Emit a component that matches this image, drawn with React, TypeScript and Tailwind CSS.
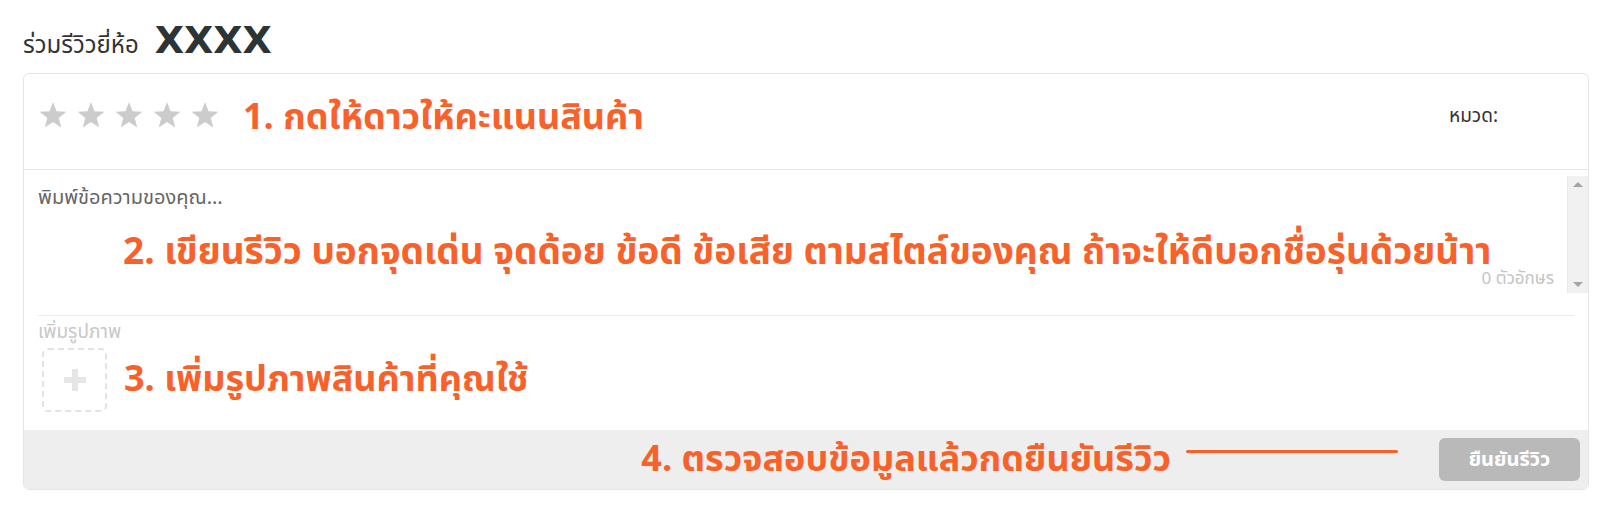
const orange = "text-[#f8622a]";

const Star = () => (
  <svg width="30" height="28" viewBox="0 0 24 23" className="shrink-0">
    <path
      d="M12 0.8l2.9 7.6 8.1.4-6.3 5.1 2.1 7.9L12 17.3l-6.8 4.5 2.1-7.9L1 8.8l8.1-.4z"
      fill="#cccccc"
    />
  </svg>
);

const Scrollbar = () => (
  <div className="w-[21px] h-[117px] mt-[6px] bg-[#f1f1f1] border-l border-[#e9e9e9] flex flex-col justify-between items-center py-[6px]">
    <div className="w-0 h-0 border-l-[5px] border-r-[5px] border-b-[5px] border-l-transparent border-r-transparent border-b-[#a3a3a3]" />
    <div className="w-0 h-0 border-l-[5px] border-r-[5px] border-t-[5px] border-l-transparent border-r-transparent border-t-[#a3a3a3]" />
  </div>
);

const App = () => {
  return (
    <div
      className="w-[1609px] h-[505px] bg-white px-[23px] pr-[20px] pt-[20px]"
      style={{ fontFamily: '"Noto Sans Thai", "Noto Sans", sans-serif' }}
    >
      <div className="flex items-baseline gap-[16px] h-[40px]">
        <span className="text-[24px] text-[#333] leading-[30px]">ร่วมรีวิวยี่ห้อ</span>
        <span
          className="text-[38px] font-bold text-[#2d3436] leading-[40px]"
          style={{ fontFamily: '"DejaVu Sans", sans-serif' }}
        >
          XXXX
        </span>
      </div>

      <div className="mt-[13px] border border-[#e5e5e5] rounded-[6px] overflow-hidden">
        {/* rating row */}
        <div className="h-[95px] flex items-center pl-[14px] pr-[90px] pb-[8px]">
          <div className="flex gap-[8px] mb-[6px]">
            {[1, 2, 3, 4, 5].map((n) => (
              <Star key={n} />
            ))}
          </div>
          <span className={`ml-[23px] text-[36px] font-bold leading-[44px] ${orange}`}>
            1. กดให้ดาวให้คะแนนสินค้า
          </span>
          <span className="ml-auto text-[19px] text-[#333]">หมวด:</span>
        </div>

        {/* text area */}
        <div className="border-t border-[#e6e6e6] flex h-[146px]">
          <div className="flex-1 flex flex-col pl-[14px] pr-[13px] pt-[15px]">
            <span className="text-[20px] text-[#666] leading-[26px]">พิมพ์ข้อความของคุณ...</span>
            <span className={`ml-[85px] mt-[20px] text-[37px] font-bold leading-[44px] ${orange}`}>
              2. เขียนรีวิว บอกจุดเด่น จุดด้อย ข้อดี ข้อเสีย ตามสไตล์ของคุณ ถ้าจะให้ดีบอกชื่อรุ่นด้วยน้าา
            </span>
            <span className="self-end text-[17px] text-[#c4c4c4] leading-[20px] -mt-[6px]">
              0 ตัวอักษร
            </span>
          </div>
          <Scrollbar />
        </div>

        {/* photos */}
        <div className="mx-[14px] border-t border-[#ebebeb] pt-[7px] pb-[18px]">
          <div className="text-[19px] text-[#c8c8c8] leading-[20px]">เพิ่มรูปภาพ</div>
          <div className="mt-[5px] flex items-center">
            <div className="ml-[4px] w-[65px] h-[64px] border-2 border-dashed border-[#e3e3e3] rounded-[6px] flex items-center justify-center">
              <svg width="22" height="22" viewBox="0 0 22 22">
                <rect x="8" y="0" width="6" height="22" fill="#e6e6e6" />
                <rect x="0" y="8" width="22" height="6" fill="#e6e6e6" />
              </svg>
            </div>
            <span className={`ml-[17px] text-[36px] font-bold leading-[44px] ${orange}`}>
              3. เพิ่มรูปภาพสินค้าที่คุณใช้
            </span>
          </div>
        </div>

        {/* footer */}
        <div className="bg-[#eeeeee] h-[59px] flex items-center justify-end p-[8px]">
          <span className={`text-[36px] font-bold leading-[44px] ${orange}`}>
            4. ตรวจสอบข้อมูลแล้วกดยืนยันรีวิว
          </span>
          <div className="ml-[15px] mr-[41px] mb-[16px] w-[212px] h-[3px] rounded-full bg-[#f8622a]" />
          <button className="w-[141px] h-[43px] rounded-[6px] bg-[#b9b9b9] text-white text-[20px] font-bold">
            ยืนยันรีวิว
          </button>
        </div>
      </div>
    </div>
  );
};

export default App;
